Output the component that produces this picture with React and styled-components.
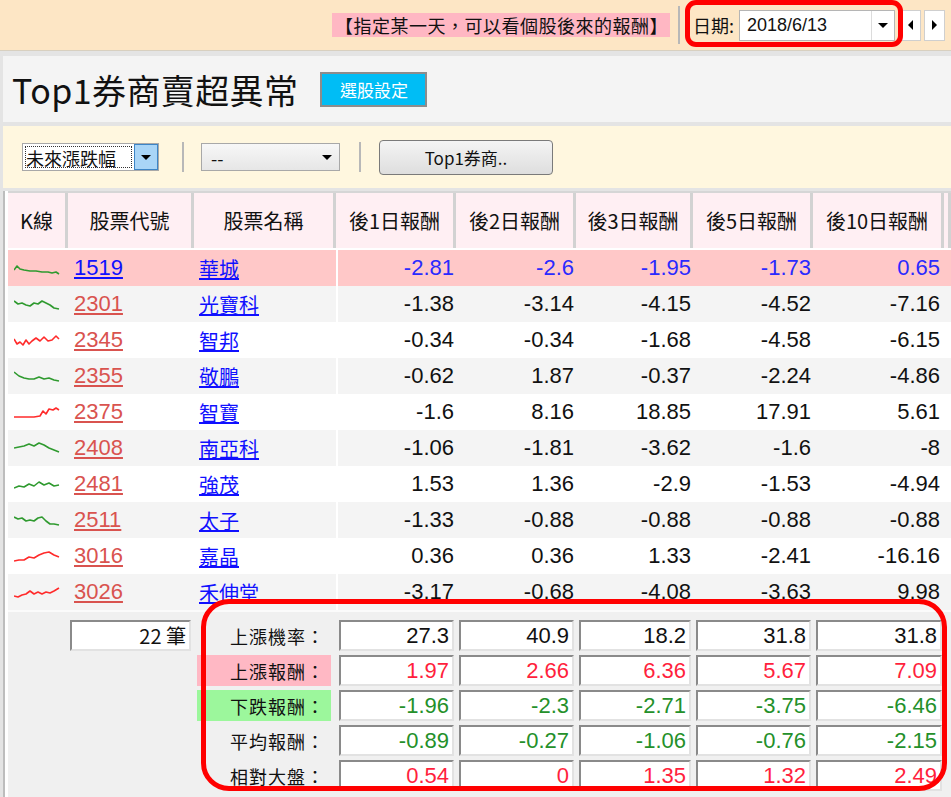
import React from 'react'
import styled, { createGlobalStyle } from 'styled-components'

const GlobalStyle = createGlobalStyle`
  body {
    margin: 0;
    background: #e4e4e4;
    font-family: "Liberation Sans", "Noto Sans CJK TC", sans-serif;
  }
`

const COLS = '60px 126px 142px 120px 120px 117px 120px 131px 7px'
const CJK = '"Noto Sans CJK TC", "Liberation Sans", sans-serif'

const Page = styled.div`
  position: relative;
  width: 951px;
  height: 797px;
  overflow: hidden;
  background: #e4e4e4;
`

const TopBar = styled.div`
  height: 50px;
  background: #fde6c5;
  display: flex;
  align-items: center;
  justify-content: flex-end;
  padding-right: 6px;
  border-bottom: 1px solid #d8d0c0;
`

const Hint = styled.div`
  background: #ffb7c3;
  font-family: ${CJK};
  font-size: 18px;
  line-height: 24px;
  letter-spacing: 0.5px;
  padding: 0 2px 0 3px;
  color: #111;
`

const VSep = styled.div`
  width: 2px;
  height: ${p => p.$h || 36}px;
  background: #b8b8b8;
  margin: ${p => p.$m || '0 7px 0 8px'};
`

const DateLabel = styled.span`
  font-family: ${CJK};
  font-size: 18px;
  margin: 0 5px 0 7px;
  color: #111;
`

const DateBox = styled.div`
  width: 154px;
  height: 29px;
  background: #fff;
  border: 1px solid #b5b5b5;
  display: flex;
  align-items: center;
`

const DateText = styled.span`
  flex: 1;
  font-size: 18px;
  padding-left: 7px;
  color: #111;
`

const DropBtn = styled.div`
  width: 22px;
  height: 100%;
  border-left: 1px solid #dcdcdc;
  display: flex;
  align-items: center;
  justify-content: center;
`

const Tri = styled.span`
  width: 0;
  height: 0;
  border-left: ${p => (p.$dir === 'down' ? '5px solid transparent' : p.$dir === 'right' ? '5px solid #000' : '0')};
  border-right: ${p => (p.$dir === 'down' ? '5px solid transparent' : p.$dir === 'left' ? '5px solid #000' : '0')};
  border-top: ${p => (p.$dir === 'down' ? '5px solid #000' : '5px solid transparent')};
  border-bottom: ${p => (p.$dir === 'down' ? '0' : '5px solid transparent')};
`

const ArrowBtn = styled.div`
  width: 19px;
  height: 29px;
  margin-left: ${p => p.$ml || 0}px;
  background: #fff;
  border: 1px solid #cfcfcf;
  display: flex;
  align-items: center;
  justify-content: center;
`

const TitlePanel = styled.div`
  margin: 5px 0 0 3px;
  height: 66px;
  background: #f4f4f4;
  display: flex;
  align-items: center;
  padding-left: 9px;
  gap: 22px;
`

const Title = styled.h1`
  margin: 0;
  font-family: ${CJK};
  font-weight: 400;
  font-size: 34px;
  color: #111;
  letter-spacing: 0.4px;
`

const PickButton = styled.div`
  width: 103px;
  height: 31px;
  background: #00bdf5;
  border: 2px solid #8c8c8c;
  color: #fff;
  font-family: ${CJK};
  font-size: 17px;
  display: flex;
  align-items: center;
  justify-content: center;
`

const Toolbar = styled.div`
  margin: 4px 0 0 3px;
  height: 62px;
  background: #fff7df;
  display: flex;
  align-items: center;
  padding-left: 19px;
`

const Select = styled.div`
  width: ${p => p.$w}px;
  height: 28px;
  box-sizing: border-box;
  border: 1px solid #a8a8a8;
  background: ${p => (p.$focus ? '#fff' : 'linear-gradient(#f7f7f7, #e6e6e6)')};
  display: flex;
  align-items: stretch;
`

const SelectText = styled.span`
  flex: 1;
  margin: 2px;
  font-family: ${CJK};
  font-size: 18px;
  line-height: 22px;
  color: #111;
  padding-left: ${p => (p.$focus ? 0 : 6)}px;
  border: ${p => (p.$focus ? '1px dotted #333' : '1px solid transparent')};
`

const SelectArrow = styled.div`
  width: 22px;
  display: flex;
  align-items: center;
  justify-content: center;
  background: ${p => (p.$focus ? '#a9d5f7' : 'transparent')};
  border: ${p => (p.$focus ? '1px solid #3d85c6' : '1px solid transparent')};
`

const ToolButton = styled.div`
  width: 172px;
  height: 33px;
  border: 1px solid #7a7a7a;
  border-radius: 4px;
  background: linear-gradient(#f4f4f4, #dedede);
  font-family: ${CJK};
  font-size: 17px;
  color: #111;
  display: flex;
  align-items: center;
  justify-content: center;
`

const TableWrap = styled.div`
  margin: 3px 0 0 3px;
  border-left: 2px solid #bdbdbd;
  padding-left: 3px;
  background: #fff;
`

const HeaderRow = styled.div`
  display: grid;
  grid-template-columns: ${COLS};
  height: 55px;
  border-top: 2px solid #d6d6d6;
  border-bottom: 2px solid #fff;
`

const HeaderCell = styled.div`
  background: #ffeff3;
  border-right: 3px solid #d2d2d2;
  display: flex;
  align-items: center;
  justify-content: center;
  font-family: ${CJK};
  font-size: 20px;
  color: #111;
`

const DataRow = styled.div`
  display: grid;
  grid-template-columns: ${COLS};
  height: 36px;
  background: ${p => p.$bg};
  align-items: center;
`

const SparkCell = styled.div`
  display: flex;
  align-items: center;
  padding-left: 6px;
`

const CodeLink = styled.a`
  font-size: 22px;
  color: ${p => p.$color};
  text-decoration: underline;
  padding-left: 6px;
`

const NameLink = styled.a`
  font-family: ${CJK};
  font-size: 20px;
  color: #1010ff;
  text-decoration: underline;
  padding-left: 5px;
`

const Num = styled.div`
  height: 100%;
  display: flex;
  align-items: center;
  justify-content: flex-end;
  padding-right: ${p => p.$pr || 2}px;
  font-size: 22px;
  color: ${p => p.$color};
  border-left: ${p => (p.$first ? '2px solid #fff' : 'none')};
`

const StatsArea = styled.div`
  border-top: 2px solid #fbfbfb;
  background: #f0f0f0;
  padding: 8px 0 10px;
  display: grid;
  grid-template-columns: ${COLS};
  grid-auto-rows: 31px;
  row-gap: 4px;
`

const InsetBox = styled.div`
  grid-column: ${p => p.$col};
  margin: 0 ${p => p.$mr || 2}px 0 ${p => p.$ml || 3}px;
  background: #fff;
  border: 2px solid;
  border-color: #8a8a8a #e2e2e2 #e2e2e2 #8a8a8a;
  display: flex;
  align-items: center;
  justify-content: flex-end;
  padding-right: 3px;
  font-size: 22px;
  color: ${p => p.$color || '#111'};
`

const CountText = styled.span`
  font-family: ${CJK};
  font-size: 20px;
`

const StatLabel = styled.div`
  grid-column: 3;
  margin: 0 5px 0 3px;
  background: ${p => p.$bg || 'transparent'};
  display: flex;
  align-items: center;
  justify-content: flex-end;
  padding-right: 6px;
  font-family: ${CJK};
  font-size: 18px;
  letter-spacing: 1px;
  color: #111;
`

const RedFrame = styled.div`
  position: absolute;
  left: ${p => p.$x}px;
  top: ${p => p.$y}px;
  width: ${p => p.$w}px;
  height: ${p => p.$h}px;
  border: 5px solid #ff0000;
  border-radius: ${p => p.$r}px;
  box-sizing: border-box;
  pointer-events: none;
`

const GREEN = '#2f9a2f'
const RED = '#ff2b2b'

const rows = [
  { code: '1519', name: '華城', up: false, pts: '0,10 3,6 6,9 10,10 16,11 22,11 28,12 34,12 38,13 42,12 45,14', v: [-2.81, -2.6, -1.95, -1.73, 0.65] },
  { code: '2301', name: '光寶科', up: false, pts: '0,5 4,8 8,7 12,9 16,10 20,7 24,8 28,5 32,7 36,9 40,12 45,13', v: [-1.38, -3.14, -4.15, -4.52, -7.16] },
  { code: '2345', name: '智邦', up: true, pts: '0,7 3,12 6,10 9,13 12,8 15,12 18,9 22,6 26,9 30,5 34,9 38,8 42,4 45,7', v: [-0.34, -0.34, -1.68, -4.58, -6.15] },
  { code: '2355', name: '敬鵬', up: false, pts: '0,4 5,8 10,10 15,11 20,11 25,9 30,11 35,10 40,12 45,13', v: [-0.62, 1.87, -0.37, -2.24, -4.86] },
  { code: '2375', name: '智寶', up: true, pts: '0,13 10,13 20,13 26,12 29,7 32,10 35,5 39,6 42,4 45,6', v: [-1.6, 8.16, 18.85, 17.91, 5.61] },
  { code: '2408', name: '南亞科', up: false, pts: '0,8 5,7 10,6 15,4 20,6 25,3 30,5 35,8 40,10 45,12', v: [-1.06, -1.81, -3.62, -1.6, -8] },
  { code: '2481', name: '強茂', up: false, pts: '0,12 5,10 10,11 15,8 20,10 25,6 30,9 35,7 40,10 45,9', v: [1.53, 1.36, -2.9, -1.53, -4.94] },
  { code: '2511', name: '太子', up: false, pts: '0,5 4,7 8,6 12,9 16,8 20,9 24,6 28,5 32,9 36,12 40,12 45,13', v: [-1.33, -0.88, -0.88, -0.88, -0.88] },
  { code: '3016', name: '嘉晶', up: true, pts: '0,13 5,12 10,12 15,9 20,10 25,7 30,5 35,4 40,7 45,9', v: [0.36, 0.36, 1.33, -2.41, -16.16] },
  { code: '3026', name: '禾伸堂', up: true, pts: '0,12 4,13 8,11 12,10 16,7 20,10 24,8 28,10 32,8 36,9 40,7 45,4', v: [-3.17, -0.68, -4.08, -3.63, 9.98] },
]

const stats = [
  { label: '上漲機率：', v: ['27.3', '40.9', '18.2', '31.8', '31.8'], color: '#111' },
  { label: '上漲報酬：', bg: '#ffb8c4', v: ['1.97', '2.66', '6.36', '5.67', '7.09'], color: '#ff1f3d' },
  { label: '下跌報酬：', bg: '#9cf79c', v: ['-1.96', '-2.3', '-2.71', '-3.75', '-6.46'], color: '#24902a' },
  { label: '平均報酬：', v: ['-0.89', '-0.27', '-1.06', '-0.76', '-2.15'], color: '#24902a' },
  { label: '相對大盤：', v: ['0.54', '0', '1.35', '1.32', '2.49'], color: '#ff1f3d' },
]

const headers = ['K線', '股票代號', '股票名稱', '後1日報酬', '後2日報酬', '後3日報酬', '後5日報酬', '後10日報酬', '']

function rowBg(i) {
  if (i === 0) return '#ffc8c8'
  return i % 2 === 1 ? '#f4f4f4' : '#ffffff'
}

const Spark = ({ pts, up }) => (
  <svg width="46" height="16" viewBox="0 0 46 16">
    <polyline points={pts} fill="none" stroke={up ? RED : GREEN} strokeWidth="1.6" strokeLinejoin="round" />
  </svg>
)

export default function App() {
  return (
    <Page>
      <GlobalStyle />
      <TopBar>
        <Hint>【指定某一天，可以看個股後來的報酬】</Hint>
        <VSep $h={38} $m="0 6px 0 8px" />
        <DateLabel>日期:</DateLabel>
        <DateBox>
          <DateText>2018/6/13</DateText>
          <DropBtn><Tri $dir="down" /></DropBtn>
        </DateBox>
        <ArrowBtn $ml={5}><Tri $dir="left" /></ArrowBtn>
        <ArrowBtn $ml={3}><Tri $dir="right" /></ArrowBtn>
      </TopBar>

      <TitlePanel>
        <Title>Top1券商賣超異常</Title>
        <PickButton>選股設定</PickButton>
      </TitlePanel>

      <Toolbar>
        <Select $w={137} $focus>
          <SelectText $focus>未來漲跌幅</SelectText>
          <SelectArrow $focus><Tri $dir="down" /></SelectArrow>
        </Select>
        <VSep $h={30} $m="0 17px 0 23px" />
        <Select $w={139}>
          <SelectText>--</SelectText>
          <SelectArrow><Tri $dir="down" /></SelectArrow>
        </Select>
        <VSep $h={30} $m="0 18px 0 19px" />
        <ToolButton>Top1券商..</ToolButton>
      </Toolbar>

      <TableWrap>
        <HeaderRow>
          {headers.map((h, i) => (
            <HeaderCell key={i}>{h}</HeaderCell>
          ))}
        </HeaderRow>
        {rows.map((r, i) => (
          <DataRow key={r.code} $bg={rowBg(i)}>
            <SparkCell><Spark pts={r.pts} up={r.up} /></SparkCell>
            <div><CodeLink $color={i === 0 ? '#1010ff' : '#d9534f'}>{r.code}</CodeLink></div>
            <div><NameLink>{r.name}</NameLink></div>
            {r.v.map((n, j) => (
              <Num key={j} $first={j === 0} $pr={j === 4 ? 4 : 2} $color={i === 0 ? '#2a2aff' : '#111'}>{n}</Num>
            ))}
            <div />
          </DataRow>
        ))}
        <StatsArea>
          {stats.map((s, i) => (
            <React.Fragment key={s.label}>
              {i === 0 && (
                <InsetBox $col={2} $ml={2} $mr={3}><CountText>22 筆</CountText></InsetBox>
              )}
              <StatLabel $bg={s.bg}>{s.label}</StatLabel>
              {s.v.map((n, j) => (
                <InsetBox key={j} $col={4 + j} $color={s.color}>{n}</InsetBox>
              ))}
            </React.Fragment>
          ))}
        </StatsArea>
      </TableWrap>

      <RedFrame $x={685} $y={0} $w={218} $h={47} $r={11} />
      <RedFrame $x={201} $y={599} $w={746} $h={192} $r={28} />
    </Page>
  )
}
